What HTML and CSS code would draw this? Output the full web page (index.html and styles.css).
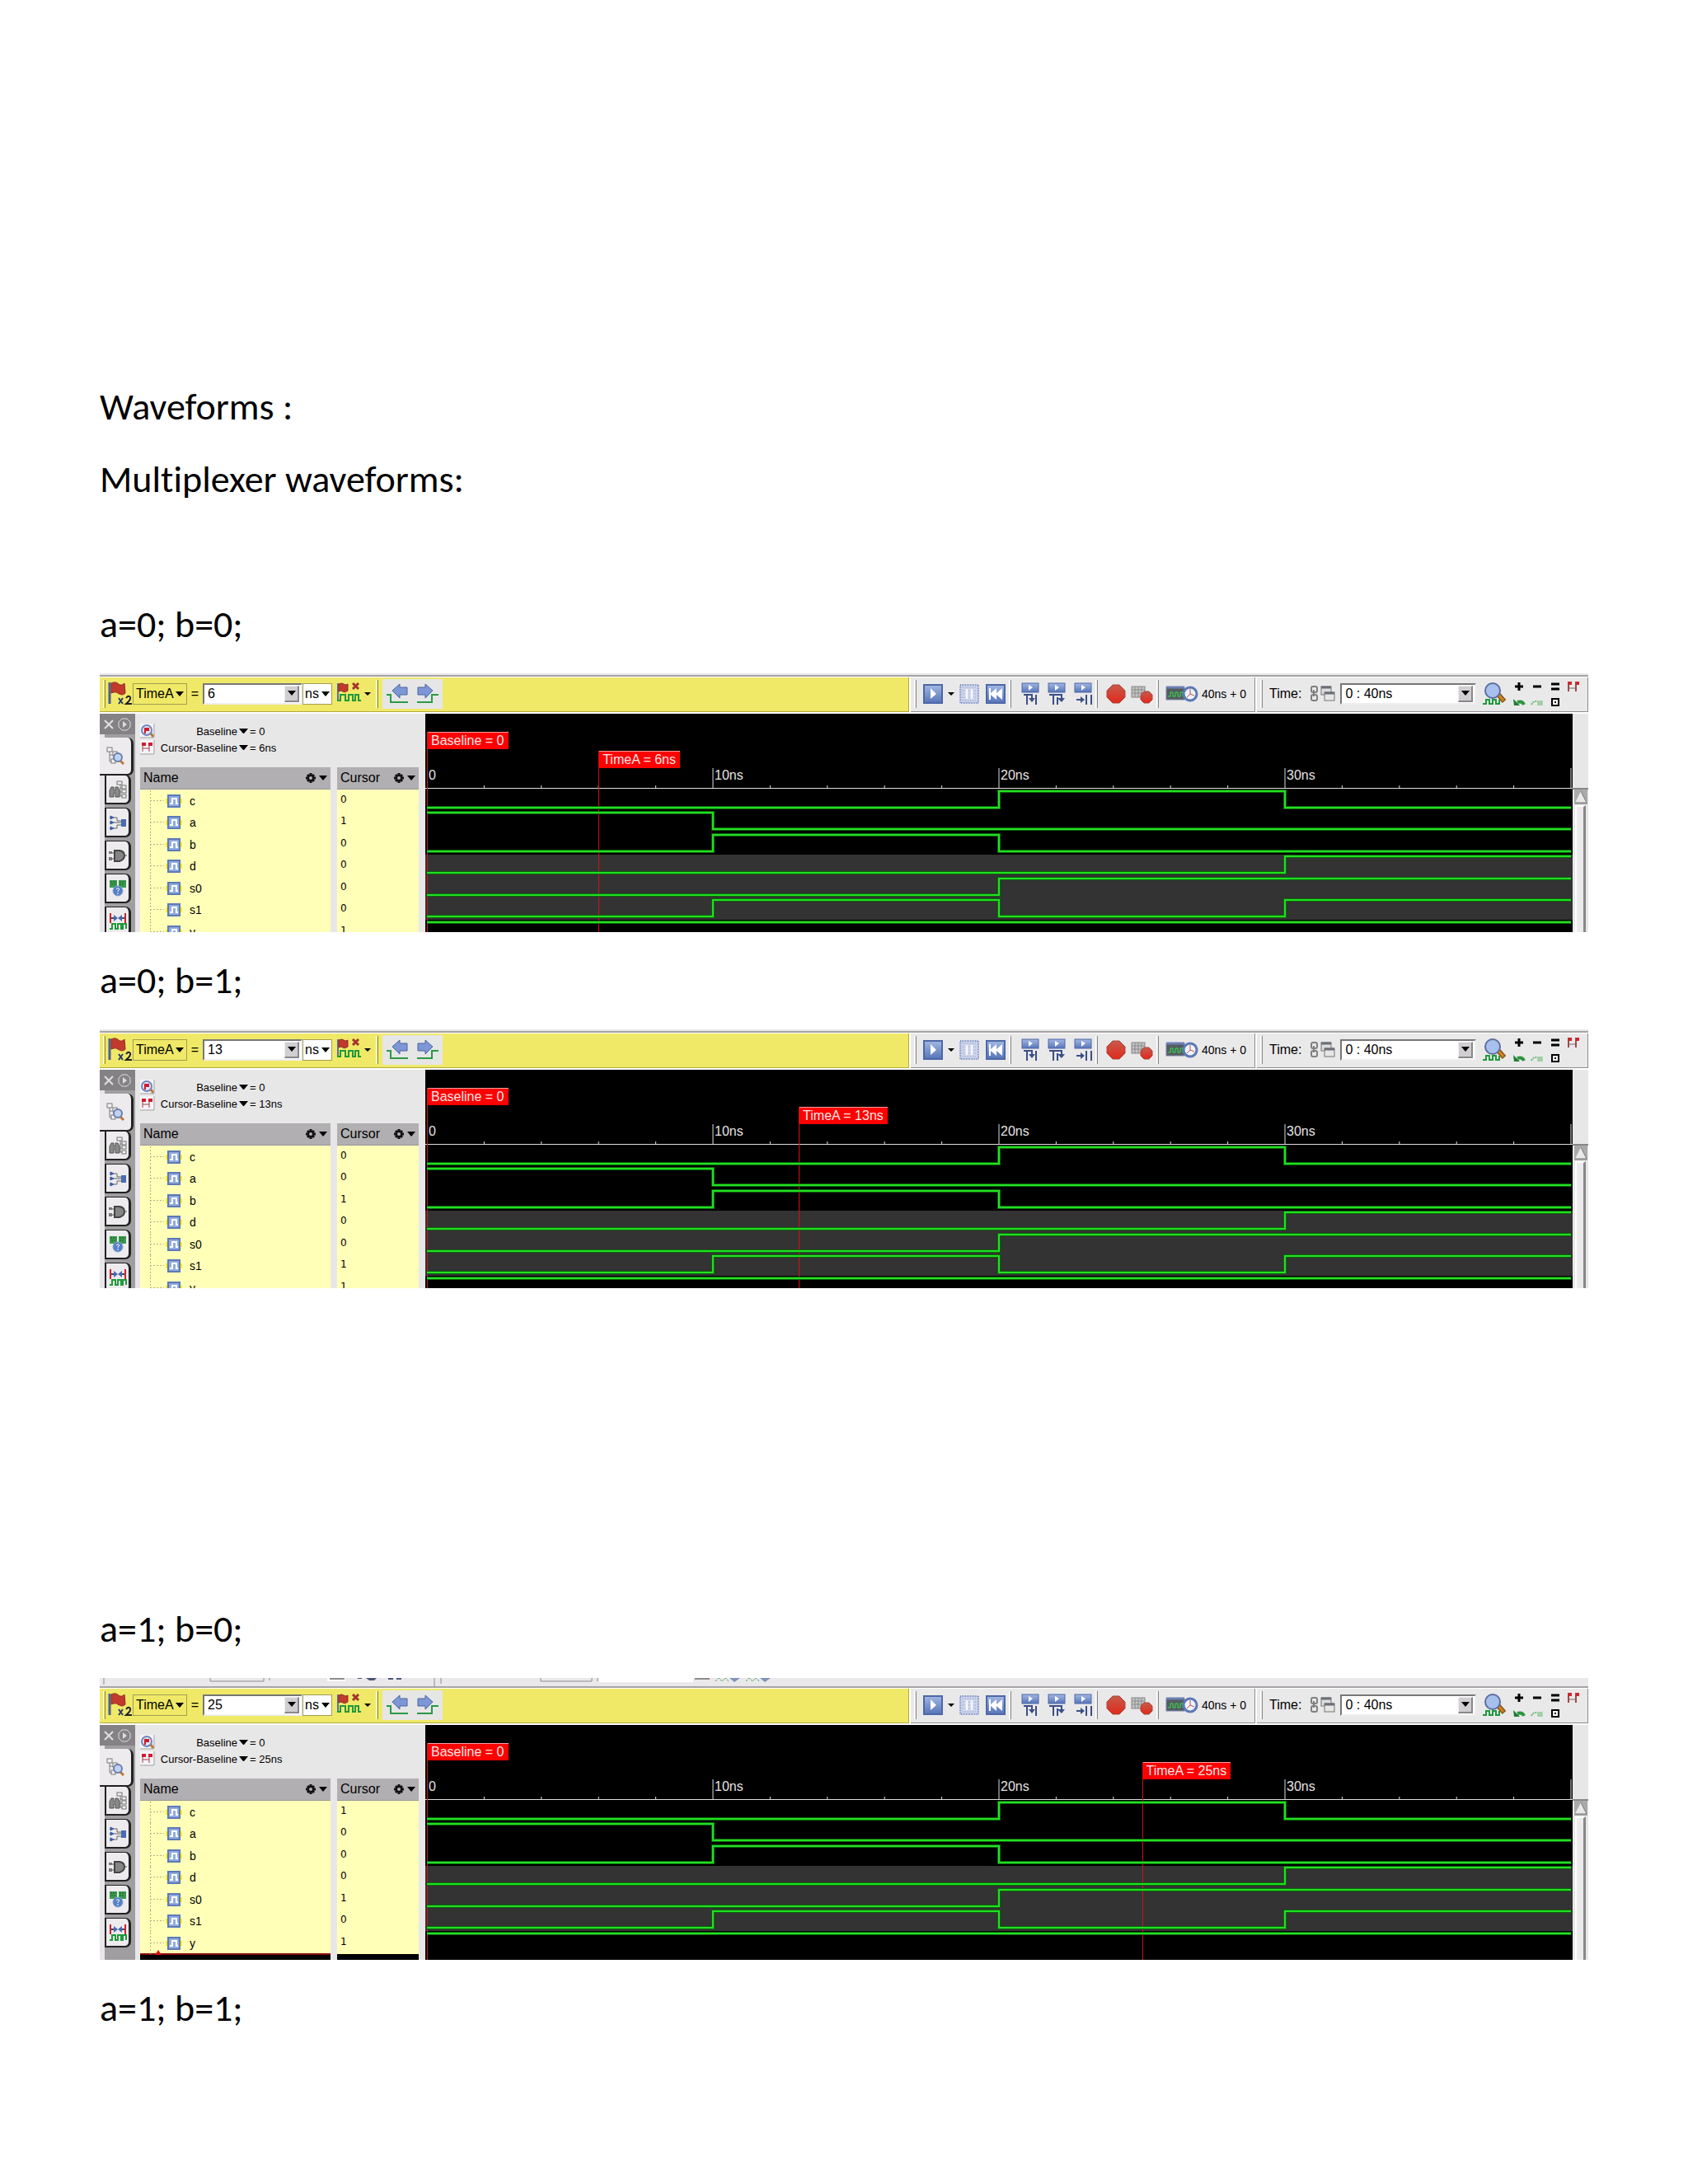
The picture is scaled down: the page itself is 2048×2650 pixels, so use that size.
FILE: index.html
```html
<!DOCTYPE html>
<html lang="en">
<head>
    <meta charset="UTF-8">
    <meta name="viewport" content="width=device-width, initial-scale=1.0">
    <title>Multiplexer waveforms</title>
    <link rel="stylesheet" href="styles.css">
</head>
<body>
    <!-- icon sprite -->
    <svg class="sprite" width="0" height="0" aria-hidden="true">
        <defs>
            <linearGradient id="blue" x1="0" y1="0" x2="0" y2="1">
                <stop offset="0" stop-color="#a3b7e2"/><stop offset="1" stop-color="#5674b8"/>
            </linearGradient>
            <linearGradient id="red" x1="0" y1="0" x2="0" y2="1">
                <stop offset="0" stop-color="#c8594a"/><stop offset="1" stop-color="#e02a1c"/>
            </linearGradient>
        </defs>
        <symbol id="flag" viewBox="0 0 30 30">
            <path d="M2 1V27" stroke="#4a5f92" stroke-width="3"/>
            <path d="M4 2C8 0 11 1 13 3S18 4 20 2L21 14C18 17 15 16 12 14S7 13 4 14Z" fill="#c23a2c" stroke="#8c2a22"/>
            <path d="M13 20L18 27M18 20L13 27" stroke="#2b3a66" stroke-width="2"/>
            <path d="M22 20Q25 16 27 19Q28 22 22 27H29" fill="none" stroke="#222" stroke-width="2"/>
        </symbol>
        <symbol id="flagwave" viewBox="0 0 32 24">
            <path d="M2 1V23" stroke="#5a6f9c" stroke-width="2"/>
            <path d="M3 2Q7 0 9 2T14 2V10Q10 13 8 11T3 11Z" fill="#c23a2c" stroke="#8c2a22"/>
            <path d="M20 1L27 8M27 1L20 8" stroke="#a3362a" stroke-width="3"/>
            <path d="M1 22H5V15H11V22H15V15H20V22H23V15H27V22H30" fill="none" stroke="#1f9a3c" stroke-width="2"/>
        </symbol>
        <symbol id="prev" viewBox="0 0 28 25">
            <path d="M1 14H6V23H27" fill="none" stroke="#2a9a44" stroke-width="2"/>
            <path d="M8 9L17 1V5H26V14H17V18Z" fill="#7d97d6" stroke="#4a65a0"/>
        </symbol>
        <symbol id="next" viewBox="0 0 28 25">
            <path d="M1 23H19V14H27" fill="none" stroke="#2a9a44" stroke-width="2"/>
            <path d="M20 9L11 1V5H2V14H11V18Z" fill="#7d97d6" stroke="#4a65a0"/>
        </symbol>
        <symbol id="play" viewBox="0 0 24 24">
            <rect x="1" y="1" width="22" height="22" fill="url(#blue)" stroke="#4d68a8" stroke-width="2"/>
            <path d="M9 5V18L16 12Z" fill="#fff"/>
        </symbol>
        <symbol id="pause" viewBox="0 0 24 24">
            <rect x="1" y="1" width="22" height="22" fill="#ccd4ea" stroke="#7c8fc4" stroke-width="2" stroke-dasharray="1 1"/>
            <path d="M3 4H21M3 8H21M3 12H21M3 16H21M3 20H21" stroke="#98a8d4" stroke-dasharray="1 1"/>
            <path d="M9 6V18M15 6V18" stroke="#f4f6fc" stroke-width="3"/>
        </symbol>
        <symbol id="rewind" viewBox="0 0 24 24">
            <rect x="1" y="1" width="22" height="22" fill="url(#blue)" stroke="#4d68a8" stroke-width="2"/>
            <path d="M4 5H6V11L13 5V11L20 5V19L13 13V19L6 13V19H4Z" fill="#fff"/>
        </symbol>
        <symbol id="step" viewBox="0 0 22 28">
            <rect x="1" y="1" width="20" height="11" fill="url(#blue)" stroke="#4d68a8"/>
            <path d="M9 3V10L14 6Z" fill="#fff"/>
            <path d="M3 15H13V22M7 15V27M18 15V27" fill="none" stroke="#3b4f86" stroke-width="2"/>
            <path d="M9 19H17L13 24Z" fill="#3b4f86"/>
        </symbol>
        <symbol id="stepover" viewBox="0 0 22 28">
            <rect x="1" y="1" width="20" height="11" fill="url(#blue)" stroke="#4d68a8"/>
            <path d="M9 3V10L14 6Z" fill="#fff"/>
            <path d="M2 15H17V21M7 15V27M12 18V27" fill="none" stroke="#3b4f86" stroke-width="2"/>
            <path d="M12 19H21L17 24Z" fill="#3b4f86"/>
        </symbol>
        <symbol id="stepout" viewBox="0 0 22 28">
            <rect x="1" y="1" width="20" height="11" fill="url(#blue)" stroke="#4d68a8"/>
            <path d="M9 3V10L14 6Z" fill="#fff"/>
            <path d="M3 21H10M15 15V27M21 15V27" stroke="#3b4f86" stroke-width="2"/>
            <path d="M8 17V25L13 21Z" fill="#3b4f86"/>
        </symbol>
        <symbol id="stop" viewBox="0 0 24 24">
            <path d="M8 1H16L23 8V16L16 23H8L1 16V8Z" fill="url(#red)" stroke="#a5483c"/>
        </symbol>
        <symbol id="breaks" viewBox="0 0 27 24">
            <rect x="1" y="3" width="16" height="13" fill="#c4c4c4" stroke="#858585"/>
            <path d="M1 7H17M1 11H17M5 3V16M9 3V16M13 3V16" stroke="#8a8a8a"/>
            <path d="M16 9H22L26 13V19L22 23H16L12 19V13Z" fill="url(#red)" stroke="#a5483c"/>
        </symbol>
        <symbol id="simtime" viewBox="0 0 40 20">
            <rect x="1" y="2" width="22" height="15" fill="#555c60" stroke="#7a86ac"/>
            <path d="M1 2H23" stroke="#6d80b4" stroke-width="3"/>
            <path d="M3 13H6V8H9V13H12V8H15V13H18V8H21V13" fill="none" stroke="#35e04a"/>
            <circle cx="30" cy="10" r="8" fill="#eef2fb" stroke="#5c78b4" stroke-width="3"/>
            <path d="M30 4V10L26 14M30 10L35 12" fill="none" stroke="#c05050" stroke-width="1"/>
        </symbol>
        <symbol id="linkwin" viewBox="0 0 31 21">
            <g fill="none" stroke="#808080" stroke-width="2">
                <rect x="2" y="2" width="7" height="7" rx="2"/><rect x="2" y="12" width="7" height="7" rx="2"/>
                <path d="M5 6V14"/>
            </g>
            <rect x="14" y="2" width="12" height="10" fill="#ddd" stroke="#757575"/>
            <rect x="18" y="9" width="12" height="10" fill="#e6e6e6" stroke="#757575"/>
            <path d="M14 3H26M18 10H30" stroke="#6a7078" stroke-width="3"/>
        </symbol>
        <symbol id="zoomfit" viewBox="0 0 30 29">
            <path d="M1 27H5V22H9V27H13V22H17V27H21V22" fill="none" stroke="#1f9a3c" stroke-width="2"/>
            <path d="M20 16L27 24" stroke="#8a5414" stroke-width="6"/>
            <path d="M20 16L26 23" stroke="#cf8428" stroke-width="3"/>
            <circle cx="13" cy="11" r="9" fill="#a8c0ee" stroke="#5c6f9e" stroke-width="2"/>
        </symbol>
        <symbol id="plus" viewBox="0 0 12 12"><path d="M6 1V11M1 6H11" stroke="#000" stroke-width="3"/></symbol>
        <symbol id="minus" viewBox="0 0 12 12"><path d="M1 6H11" stroke="#000" stroke-width="3"/></symbol>
        <symbol id="equal" viewBox="0 0 12 12"><path d="M1 3H11M1 9H11" stroke="#000" stroke-width="3"/></symbol>
        <symbol id="range" viewBox="0 0 16 14">
            <path d="M2 1V13M11 1V13" stroke="#a04848" stroke-width="2"/><path d="M3 9H11" stroke="#666" stroke-width="1"/>
            <path d="M2 1H6V5H2ZM11 1H15V5H11Z" fill="#d0252b"/>
        </symbol>
        <symbol id="undo" viewBox="0 0 16 10">
            <path d="M14 8Q12 3 6 5" fill="none" stroke="#2c9440" stroke-width="4"/><path d="M1 1L2 9L9 9Z" fill="#1f7d33"/>
        </symbol>
        <symbol id="redo" viewBox="0 0 16 10">
            <path d="M1 8Q4 2 10 5" fill="none" stroke="#74b87e" stroke-width="2" stroke-dasharray="2 1"/>
            <path d="M8 3H15V9H8Z" fill="#8fc697"/><path d="M8 4H15M8 6H15M8 8H15" stroke="#dfe9df" stroke-dasharray="1 1"/>
        </symbol>
        <symbol id="box" viewBox="0 0 10 10">
            <rect x="1" y="1" width="8" height="8" fill="#fff" stroke="#000" stroke-width="2"/><path d="M4 4H6V6H4Z"/>
        </symbol>
        <symbol id="findflag" viewBox="0 0 18 18">
            <rect width="18" height="18" fill="#f4f4f8"/>
            <path d="M13 12L16 16" stroke="#c07828" stroke-width="3"/>
            <circle cx="8" cy="8" r="6" fill="#dfe4f4" stroke="#7186bc" stroke-width="2"/>
            <path d="M5 5H11V9H7V12H5Z" fill="#d01c2c"/><path d="M17 0V17H0" fill="none" stroke="#999"/>
        </symbol>
        <symbol id="flags" viewBox="0 0 18 18">
            <rect width="18" height="18" fill="#f4f4f8"/>
            <path d="M3 3V14M11 3V14M3 10H11" stroke="#a43c44" stroke-width="1" fill="none"/>
            <path d="M2 3H7V7H2ZM10 3H15V7H10Z" fill="#d01c2c"/><path d="M17 0V17H0" fill="none" stroke="#999"/>
        </symbol>
        <symbol id="gear" viewBox="0 0 14 14">
            <path d="M7 1V13M1 7H13M3 3L11 11M11 3L3 11" stroke="#111" stroke-width="3"/>
            <circle cx="7" cy="7" r="3" fill="#b3b1b4" stroke="#111" stroke-width="2"/>
        </symbol>
        <symbol id="signal" viewBox="0 0 20 16">
            <path d="M0 5H20V11H0Z" fill="#ffee20"/>
            <rect x="2" y="0" width="16" height="16" fill="#5b79b8"/>
            <rect x="4" y="2" width="12" height="12" fill="#93abdc"/>
            <path d="M5 11H8V5H13V11H15" fill="none" stroke="#fff" stroke-width="2"/>
        </symbol>
        <symbol id="tree" viewBox="0 0 22 22">
            <g fill="#f2f2f2" stroke="#7a7a7a"><path d="M4 6V18H9M4 10H9" fill="none"/>
                <rect x="1" y="1" width="6" height="5"/><rect x="8" y="6" width="5" height="5"/><rect x="6" y="15" width="5" height="5"/></g>
            <path d="M17 17L21 21" stroke="#c0782c" stroke-width="3"/>
            <circle cx="14" cy="13" r="5" fill="#c0d2f2" stroke="#6a7fae" stroke-width="2"/>
        </symbol>
        <symbol id="binoc" viewBox="0 0 22 22">
            <g fill="#eee" stroke="#777"><path d="M14 4V19H17M14 9H17M14 14H17" fill="none"/>
                <rect x="10" y="1" width="6" height="4"/><rect x="16" y="6" width="5" height="4"/><rect x="16" y="11" width="5" height="4"/><rect x="16" y="17" width="5" height="4"/></g>
            <path d="M1 20V12L3 8H6V12H8V8H11L13 12V20H8V15H6V20Z" fill="#8a8a8a" stroke="#555"/>
        </symbol>
        <symbol id="chip" viewBox="0 0 22 22">
            <path d="M1 5H10V9H15M1 11H15M1 18H10V14H15" fill="none" stroke="#666" stroke-width="1"/>
            <path d="M2 3L6 5L2 7ZM2 9L6 11L2 13ZM2 16L6 18L2 20Z" fill="#3c5fa8" stroke="#3c5fa8"/>
            <rect x="15" y="7" width="6" height="9" fill="#4a6cb0"/>
        </symbol>
        <symbol id="gate" viewBox="0 0 22 22">
            <path d="M0 8H7M0 15H7M18 11H22" stroke="#555" stroke-width="1"/><path d="M0 6H4V9H0ZM0 13H4V17H0Z" fill="#777"/>
            <path d="M7 5H13Q19 6 19 11T13 18H7Z" fill="#858585" stroke="#444" stroke-width="2"/>
        </symbol>
        <symbol id="compare" viewBox="0 0 22 22">
            <path d="M1 1H10V10H1ZM12 1H21V10H12Z" fill="#3a9a4c"/>
            <path d="M2 3H9M3 6H9M13 3H20M13 6H19" stroke="#1c5f2c" stroke-dasharray="2 1"/>
            <circle cx="11" cy="14" r="6" fill="#5580c4" stroke="#86a4d8"/>
            <path d="M9 12Q11 9 13 12L11 14V15M11 16V18" fill="none" stroke="#fff"/>
        </symbol>
        <symbol id="wavecmp" viewBox="0 0 22 22">
            <path d="M2 1V13M20 1V13" stroke="#d0202c" stroke-width="2"/>
            <path d="M3 7H6M16 7H19" stroke="#446" stroke-width="2"/><path d="M6 3L11 7L6 11ZM16 3L11 7L16 11Z" fill="#4a68b0"/>
            <path d="M1 20H4V14H8V20H11V14H15V20H17V14H21V20" fill="none" stroke="#1f9a3c" stroke-width="2"/>
        </symbol>
        <symbol id="close" viewBox="0 0 12 12"><path d="M1 1L11 11M11 1L1 11" stroke="#e0e0e0" stroke-width="2"/></symbol>
        <symbol id="dockplay" viewBox="0 0 16 16">
            <path d="M5 1H11L15 5V11L11 15H5L1 11V5Z" fill="none" stroke="#ddd" stroke-width="1"/><path d="M6 4V12L11 8Z" fill="#ddd"/>
        </symbol>
        <symbol id="up" viewBox="0 0 16 18">
            <rect width="16" height="18" fill="#aaa"/><path d="M8 2L15 16H1Z" fill="#e8e8e8"/><path d="M8 2L15 16H1" fill="none" stroke="#777" stroke-width="1"/>
        </symbol>
        <!-- lower edge of the toolbar row above -->
        <symbol id="edge" viewBox="0 0 840 13">
            <path d="M276 0H298V4H276ZM606 0H720V5H606Z" fill="#fff"/>
            <g fill="none" stroke="#8e8c8e">
                <path d="M5 0V8M134 0V4H199V0M206 0V3M406 0V11M414 0V7M535 0V4H597V0M604 0V4"/>
                <path d="M279 1H297M722 1H740" stroke-width="2"/>
            </g>
            <path d="M313 0H318V1H313ZM323 0H336L333 3H327ZM350 0H356V2H350ZM360 0H366V2H360Z" fill="#4a5878"/>
            <path d="M747 4L751 0L755 4L759 0L763 4M784 4L788 0L792 4L796 0L800 4" fill="none" stroke="#4fa860" stroke-dasharray="3 1"/>
            <path d="M764 0H777L770 5ZM801 0H814L807 5Z" fill="#7f93bb"/>
        </symbol>
    </svg>

    <main class="page">
        <p>Waveforms :</p>
        <p class="gap-line">Multiplexer waveforms:</p>

        <p>a=0; b=0;</p>
        <section class="sim" data-time="6"></section>

        <p>a=0; b=1;</p>
        <section class="sim gap-page" data-time="13"></section>

        <p>a=1; b=0;</p>
        <section class="sim sim-tall" data-time="25"></section>

        <p>a=1; b=1;</p>
    </main>

    <script src="script.js"></script>
</body>
</html>
```
FILE: styles.css
```css
* {
    box-sizing: border-box;
}
body {
    margin: 0;
    background: #fff;
    color: #000;
    font-family: "Liberation Sans", Arial, sans-serif;
    font-size: 16px;
}
svg {
    display: block;
    flex: none;
}
.sprite {
    position: absolute;
}
.page {
    padding: 449px 121px 170px;
}
.page > p {
    margin: 0;
    font-family: Carlito, Calibri, Lato, sans-serif;
    font-size: 46px;
    font-variant-ligatures: none;
    line-height: 88px;
}
.page > .gap-line {
    margin-bottom: 88px;
}

/* simulator window, clipped at the bottom */
.sim {
    display: flex;
    flex-direction: column;
    height: 314px;
    margin: 16px 0 14px;
    overflow: hidden;
    background: #fff;
}
.sim-tall {
    height: 342px;
}
.gap-page {
    margin-bottom: 369px;
}
.strip {
    flex: none;
    height: 5px;
    overflow: hidden;
    background: #eae8ea;
    border-bottom: 1px solid #fff;
    box-shadow: inset 0 -2px #a5a3a5;
}
.strip svg {
    display: none;
}
.sim-tall .strip {
    height: 13px;
}
.sim-tall .strip svg {
    display: block;
}

/* toolbars */
.toolbar {
    display: flex;
    flex: none;
    height: 44px;
    gap: 2px;
    padding-bottom: 2px;
}
.bar {
    display: flex;
    align-items: center;
    padding: 0 0 2px 4px;
    background: #eae9ea;
    border-bottom: 1px solid #8e8c8e;
    border-right: 1px solid #8e8c8e;
}
.bar-cursor {
    flex: 1;
    background: #f0e968;
    border-color: #b0a93c;
}
.bar-run {
    width: 418px;
}
.bar-time {
    width: 402px;
}
.handle {
    flex: none;
    width: 3px;
    height: 34px;
    border-left: 1px solid #fff;
    border-right: 1px solid #888;
}
.bar-cursor .handle {
    border-right-color: #8c8840;
}
.bar button {
    padding: 0;
    border: 0;
    background: none;
    color: inherit;
    font: inherit;
    flex: none;
}
.arrow::after,
.pick::after {
    content: "";
    display: block;
    border: 5px solid transparent;
    border-top: 6px solid #000;
    border-bottom: 0;
}
.bar .arrow-small {
    margin: 0 6px 0 2px;
}
.bar .arrow-small::after {
    border-width: 4px 4px 0;
}
.pick {
    display: flex;
    align-items: center;
    justify-content: center;
    height: 26px;
    width: 66px;
    border: 1px solid #a29d50;
}
.pick-unit {
    width: 36px;
    background: #fff;
}
.pick select {
    appearance: none;
    width: 48px;
    padding: 0;
    border: 0;
    background: none;
    color: #000;
    font: inherit;
}
.pick-unit select {
    width: 20px;
}
.equals {
    width: 19px;
    text-align: center;
}
.combo {
    display: flex;
    align-items: center;
    width: 121px;
    height: 26px;
    padding: 1px 2px;
    background: #fff;
    border: 2px solid;
    border-color: #777 #eee #eee #777;
}
.combo input {
    flex: 1;
    min-width: 0;
    padding: 0 0 0 2px;
    border: 0;
    outline: 0;
    background: none;
    color: #000;
    font: inherit;
}
.bar .combo .arrow {
    display: grid;
    place-items: center;
    width: 18px;
    height: 20px;
    background: #d0ced0;
    border: solid;
    border-width: 1px 2px 2px 1px;
    border-color: #eee #888 #888 #eee;
}
.flag {
    margin: 0 0 0 3px;
}
.clear-flags {
    margin-left: 5px;
}
.edges {
    display: flex;
    align-items: center;
    gap: 9px;
    height: 36px;
    margin-left: 5px;
    padding: 0 4px;
    background: #e6e6e6;
}
.group {
    display: flex;
    align-items: center;
    gap: 8px;
    margin-left: 8px;
}
.steps {
    gap: 10px;
    margin-left: 12px;
}
.breaks {
    gap: 6px;
    margin-left: 10px;
}
.run .arrow-small {
    margin: 0 -2px;
}
.group output {
    margin-left: -4px;
    font-size: 14px;
}
.group + .handle {
    margin-left: 4px;
}
.bar-time label {
    margin: 0 10px 0 8px;
}
.bar-time .combo {
    width: 165px;
    margin: 0 7px 0 6px;
}
.zooms {
    display: grid;
    grid-template-columns: repeat(4, 16px);
    gap: 6px;
    align-items: center;
    justify-items: center;
    margin-left: 7px;
    height: 32px;
}

/* body */
.body {
    display: flex;
    flex: 1;
    min-height: 0;
}
.dock {
    display: flex;
    flex-direction: column;
    gap: 4px;
    width: 43px;
    background: linear-gradient(to right, #e8e6e8 6px, #a09ea0 6px);
}
.dock-head {
    display: flex;
    flex: none;
    align-items: center;
    justify-content: center;
    gap: 5px;
    height: 25px;
    background: #848284;
}
.dock button {
    display: grid;
    flex: none;
    place-items: center;
    width: 32px;
    height: 36px;
    margin-left: 6px;
    padding: 0;
    background: #edebed;
    border: solid #222;
    border-width: 1px 3px 2px 2px;
    border-radius: 0 7px 7px 0;
}
.dock button.selected {
    width: 41px;
    height: 46px;
    margin: 0 0 -5px;
    border-width: 0 3px 2px 0;
}
.side {
    display: flex;
    flex-direction: column;
    width: 352px;
    padding: 12px 8px 0 6px;
    background: #e8e7e8;
}
.delta {
    display: grid;
    grid-template-columns: 18px 98px 11px auto;
    gap: 2px;
    grid-auto-rows: 18px;
    align-items: center;
    flex: none;
    height: 53px;
    font-size: 13px;
    white-space: nowrap;
}
.delta label {
    text-align: right;
}
.delta .arrow {
    padding: 0;
    border: 0;
    background: none;
}
.signals {
    border-collapse: collapse;
    table-layout: fixed;
    width: 100%;
}
.signals th,
.signals td {
    padding: 0;
    text-align: left;
    font-weight: normal;
}
.signals .name {
    width: 231px;
}
.signals .space {
    width: 8px;
}
.signals thead th {
    height: 26px;
    background: #b1afb1;
    border-bottom: 1px solid #999;
}
.signals .head {
    display: flex;
    align-items: center;
    gap: 3px;
    padding: 0 4px;
}
.head span {
    flex: 1;
}
.head .arrow {
    padding: 0;
    border: 0;
    background: none;
}
.signals tbody tr {
    height: 26px;
}
.signals tbody tr:nth-child(even) {
    height: 27px;
}
.signals tbody .name,
.signals tbody .value {
    background: #ffffb8;
}
.signals tbody .value {
    padding: 0 0 2px 4px;
    font-family: "DejaVu Sans", sans-serif;
    font-size: 12px;
    line-height: 16px;
}
.branch {
    display: flex;
    align-items: center;
    gap: 9px;
    height: 26px;
    padding: 2px 0 0 12px;
    font-size: 14px;
}
.branch::before {
    content: "";
    width: 17px;
    height: 26px;
    margin-right: -7px;
    background:
        linear-gradient(to right, #b8b08a 50%, transparent 50%) 0 12px / 4px 1px repeat-x,
        linear-gradient(#b8b08a 50%, transparent 50%) 0 0 / 1px 4px repeat-y;
}
.signals tbody .drop td {
    height: 9px;
    padding: 0;
}
.signals tbody .drop .name,
.signals tbody .drop .value {
    background: #000;
}
.signals tbody .drop .name {
    position: relative;
    border-top: 2px solid #8b1010;
}
.drop .name::before {
    content: "";
    position: absolute;
    top: -6px;
    left: 18px;
    border: 4px solid transparent;
    border-top: 0;
    border-bottom: 6px solid #e01010;
}

/* waveform area */
.wave {
    position: relative;
    flex: 1;
    padding: 0 2px;
    background: #000;
    color: #e4e4e4;
}
.plot {
    position: relative;
    height: 100%;
}
.ruler {
    height: 91px;
    margin: 0 -2px;
    padding: 66px 2px 0;
    border-bottom: 1px solid #ddd;
}
.ruler svg {
    width: 100%;
    height: 24px;
    overflow: visible;
}
.ruler path {
    stroke: #ddd;
    stroke-width: 1px;
    vector-effect: non-scaling-stroke;
}
.tick {
    position: absolute;
    top: 66px;
    padding-left: 2px;
    line-height: 18px;
}
.marker {
    position: absolute;
    top: 22px;
    bottom: 0;
    border-left: 1px solid #d01414;
}
.marker-time {
    top: 45px;
}
.marker span {
    display: block;
    height: 21px;
    padding: 0 5px 0 4px;
    background: #f00;
    border-top: 1px solid #ff9c9c;
    color: #ffe8e8;
    line-height: 20px;
    white-space: nowrap;
}
.traces {
    position: relative;
    margin: 0 -2px;
    padding: 0 2px;
}
.shade {
    position: absolute;
    inset: 91px 0 auto;
    display: flow-root;
}
.stripe {
    height: 79px;
    margin-top: 80px;
    background: #333;
}
.traces svg {
    width: 100%;
    height: 185px;
    overflow: visible;
}
.traces path {
    fill: none;
    stroke: #22e022;
    stroke-width: 2px;
    vector-effect: non-scaling-stroke;
}
.traces .glow {
    stroke: #0b650b;
    stroke-width: 4px;
}
.scroll {
    display: flex;
    flex-direction: column;
    align-items: center;
    width: 19px;
    padding-top: 90px;
    background: #e8e7e8;
}
.scroll::before {
    content: "";
    width: 100%;
    border-top: 2px solid #888;
}
.scroll button {
    padding: 0;
    border: 0;
    background: none;
}
.thumb {
    flex: 1;
    width: 13px;
    margin-top: 1px;
    background: #eceaec;
    border: solid;
    border-width: 2px 3px 0 2px;
    border-color: #fff #888 #888 #fff;
}
```
FILE: script.js
```javascript
// level of each signal in the four 10ns slots
const signals = [
    { name: 'c', levels: [0, 0, 1, 0] },
    { name: 'a', levels: [1, 0, 0, 0] },
    { name: 'b', levels: [0, 1, 0, 0] },
    { name: 'd', levels: [0, 0, 0, 1] },
    { name: 's0', levels: [0, 0, 1, 1] },
    { name: 's1', levels: [0, 1, 0, 1] },
    { name: 'y', levels: [1, 1, 1, 1] }
];
const rowTops = [0, 26, 53, 79, 106, 132, 159];
const END = 40;

function icon(id, w, h) {
    return `<svg width="${w}" height="${h}" aria-hidden="true"><use href="#${id}"/></svg>`;
}

function iconButton(id, w, h, label) {
    return `<button type="button" aria-label="${label}">${icon(id, w, h)}</button>`;
}

function tracePath(levels, top) {
    let d = '';
    levels.forEach((level, i) => {
        const y = top + (level ? 3 : 23);
        d += `${i ? 'L' : 'M'}${i * 10} ${y}H${(i + 1) * 10}`;
    });
    return d;
}

function rulerPath() {
    let d = '';
    for (let t = 2; t <= END; t += 2) {
        d += `M${t} ${t % 10 ? 21 : 0}V24`;
    }
    return d;
}

function toolbar(time) {
    return `
        <div class="strip">${icon('edge', 840, 13)}</div>
        <div class="toolbar">
            <div class="bar bar-cursor">
                <i class="handle"></i>
                <span class="flag">${icon('flag', 30, 30)}</span>
                <span class="pick"><select aria-label="Cursor"><option>TimeA</option></select></span>
                <span class="equals">=</span>
                <span class="combo"><input type="text" aria-label="Cursor time" value="${time}"><button type="button" class="arrow" aria-label="Recent times"></button></span>
                <span class="pick pick-unit"><select aria-label="Unit"><option>ns</option></select></span>
                <span class="clear-flags">${iconButton('flagwave', 32, 24, 'Delete marker')}</span>
                <button type="button" class="arrow arrow-small" aria-label="Marker menu"></button>
                <i class="handle"></i>
                <span class="edges">${iconButton('prev', 28, 25, 'Previous edge')}${iconButton('next', 28, 25, 'Next edge')}</span>
            </div>
            <div class="bar bar-run">
                <i class="handle"></i>
                <span class="group run">${iconButton('play', 24, 24, 'Run')}<button type="button" class="arrow arrow-small" aria-label="Run menu"></button>${iconButton('pause', 24, 24, 'Pause')}${iconButton('rewind', 24, 24, 'Reset')}</span>
                <i class="handle"></i>
                <span class="group steps">${iconButton('step', 22, 28, 'Step')}${iconButton('stepover', 22, 28, 'Step over')}${iconButton('stepout', 22, 28, 'Step out')}</span>
                <i class="handle"></i>
                <span class="group breaks">${iconButton('stop', 24, 24, 'Stop')}${iconButton('breaks', 27, 24, 'Breakpoints')}</span>
                <i class="handle"></i>
                <span class="group">${icon('simtime', 40, 20)}<output>40ns + 0</output></span>
            </div>
            <div class="bar bar-time">
                <i class="handle"></i>
                <label for="range${time}">Time:</label>
                ${iconButton('linkwin', 31, 21, 'Link windows')}
                <span class="combo"><input type="text" id="range${time}" value="0 : 40ns"><button type="button" class="arrow" aria-label="Recent ranges"></button></span>
                ${iconButton('zoomfit', 30, 29, 'Zoom')}
                <div class="zooms">
                    ${iconButton('plus', 12, 12, 'Zoom in')}${iconButton('minus', 12, 12, 'Zoom out')}${iconButton('equal', 12, 12, 'Zoom full')}${iconButton('range', 16, 14, 'Zoom to cursors')}
                    ${iconButton('undo', 16, 10, 'Undo zoom')}${iconButton('redo', 16, 10, 'Redo zoom')}${iconButton('box', 10, 10, 'Zoom area')}
                </div>
            </div>
        </div>`;
}

// cursor readings as logged by the simulator for each run
const readings = {
    6: [0, 1, 0, 0, 0, 0, 1],
    13: [0, 0, 1, 0, 0, 1, 1],
    25: [1, 0, 0, 0, 1, 0, 1]
};

function signalTable(time) {
    const head = title => `<div class="head"><span>${title}</span>${icon('gear', 14, 14)}<button type="button" class="arrow" aria-label="${title} options"></button></div>`;
    const rows = signals.map((s, i) => `
        <tr><td class="name"><div class="branch">${icon('signal', 20, 16)}${s.name}</div></td><td></td><td class="value">${readings[time][i]}</td></tr>`);
    return `
        <table class="signals">
            <thead><tr><th class="name">${head('Name')}</th><td class="space"></td><th>${head('Cursor')}</th></tr></thead>
            <tbody>${rows.join('')}
                <tr class="drop"><td class="name"></td><td></td><td class="value"></td></tr>
            </tbody>
        </table>`;
}

function waves(time) {
    const paths = signals.map((s, i) => tracePath(s.levels, rowTops[i]));
    const ticks = [0, 10, 20, 30].map(t => `<span class="tick" style="left: ${t / END * 100}%">${t ? t + 'ns' : t}</span>`);
    return `
        <div class="wave">
            <div class="shade"><div class="stripe"></div></div>
            <div class="plot">
                <div class="ruler"><svg viewBox="0 0 ${END} 24" preserveAspectRatio="none"><path d="${rulerPath()}"/></svg></div>
                ${ticks.join('')}
                <div class="marker"><span>Baseline = 0</span></div>
                <div class="marker marker-time" style="left: ${time / END * 100}%"><span>TimeA = ${time}ns</span></div>
                <div class="traces">
                    <svg viewBox="0 0 ${END} 185" preserveAspectRatio="none">
                        ${paths.map(d => `<path class="glow" d="${d}"/><path d="${d}"/>`).join('')}
                    </svg>
                </div>
            </div>
        </div>`;
}

function dock() {
    const tabs = ['tree', 'binoc', 'chip', 'gate', 'compare', 'wavecmp'];
    return `
        <div class="dock">
            <div class="dock-head">${icon('close', 12, 12)}${icon('dockplay', 16, 16)}</div>
            ${tabs.map((t, i) => `<button type="button" class="${i ? '' : 'selected'}" aria-label="${t}">${icon(t, 22, 22)}</button>`).join('')}
        </div>`;
}

document.querySelectorAll('.sim').forEach(sim => {
    const time = Number(sim.dataset.time);
    sim.innerHTML = `
        ${toolbar(time)}
        <div class="body">
            ${dock()}
            <div class="side">
                <div class="delta">
                    ${icon('findflag', 18, 18)}<label>Baseline</label><button type="button" class="arrow" aria-label="Baseline menu"></button><span>= 0</span>
                    ${icon('flags', 18, 18)}<label>Cursor-Baseline</label><button type="button" class="arrow" aria-label="Difference menu"></button><span>= ${time}ns</span>
                </div>
                ${signalTable(time)}
            </div>
            ${waves(time)}
            <div class="scroll"><button type="button" aria-label="Scroll up">${icon('up', 16, 18)}</button><div class="thumb"></div></div>
        </div>`;
});
```
